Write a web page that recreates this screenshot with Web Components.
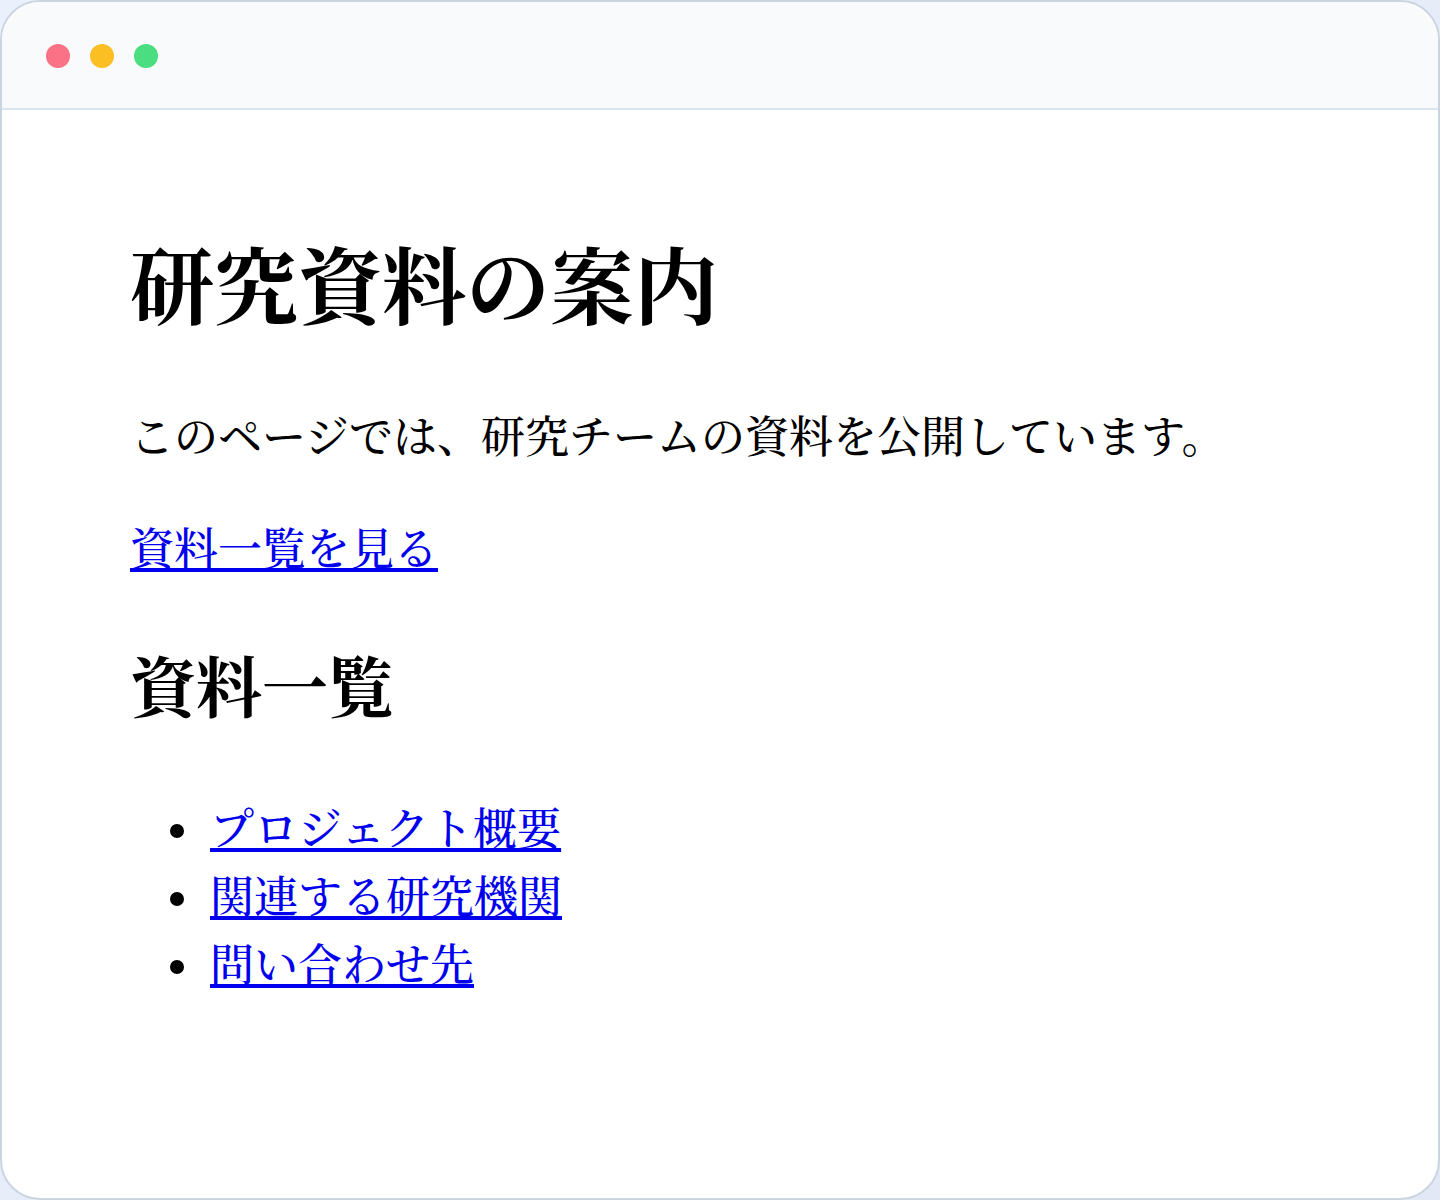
<!DOCTYPE html>
<html lang="ja">
<head>
<meta charset="utf-8">
<title>研究資料の案内</title>
<style>
html, body { margin: 0; min-height: 100%; }
body { background: linear-gradient(135deg, #eaf1fc, #e2e8f5); font-family: "Liberation Serif", "Noto Serif CJK JP", "Noto Serif JP", "Noto Sans CJK JP", serif; font-size: 44px; font-weight: 500; color: #000; }
</style>
</head>
<body>
<browser-window>
  <research-page></research-page>
</browser-window>
<script>
class BrowserWindow extends HTMLElement {
  constructor() {
    super();
    this.attachShadow({ mode: "open" }).innerHTML = `
      <style>
        :host { display: flex; flex-direction: column; box-sizing: border-box; min-height: 100vh; border: 2px solid #cbd5e1; border-radius: 40px; overflow: hidden; background: #fff; }
        header { display: flex; gap: 20px; padding: 42px 44px 40px; background: #f8fafc; border-bottom: 2px solid #dbe5f1; }
        span { width: 24px; height: 24px; border-radius: 50%; }
        .close { background: #fb7185; }
        .minimize { background: #fbbf24; }
        .zoom { background: #4ade80; }
      </style>
      <header><span class="close"></span><span class="minimize"></span><span class="zoom"></span></header>
      <slot></slot>`;
  }
}
class ResearchPage extends HTMLElement {
  constructor() {
    super();
    this.attachShadow({ mode: "open" }).innerHTML = `
      <style>
        :host { display: block; padding: 116px 128px; }
        h1, h2, p, ul { margin: 0; }
        h1 { font-size: 84px; line-height: 128px; margin-bottom: 51px; }
        p { line-height: 68px; margin-bottom: 44px; }
        h2 { font-size: 66px; line-height: 96px; margin: 57px 0 59px; }
        ul { padding-left: 40px; line-height: 68px; list-style: none; }
        li { display: flex; align-items: center; gap: 26px; }
        li::before { content: ""; flex: none; width: 14px; height: 14px; border-radius: 50%; background: currentColor; }
        a { color: #00e; text-decoration: underline; }
      </style>
      <main>
        <h1>研究資料の案内</h1>
        <p>このページでは、研究チームの資料を公開しています。</p>
        <p><a href="#list">資料一覧を見る</a></p>
        <h2 id="list">資料一覧</h2>
        <ul>
          <li><a href="#overview">プロジェクト概要</a></li>
          <li><a href="#institutions">関連する研究機関</a></li>
          <li><a href="#contact">問い合わせ先</a></li>
        </ul>
      </main>`;
  }
}
customElements.define("browser-window", BrowserWindow);
customElements.define("research-page", ResearchPage);
</script>
</body>
</html>
